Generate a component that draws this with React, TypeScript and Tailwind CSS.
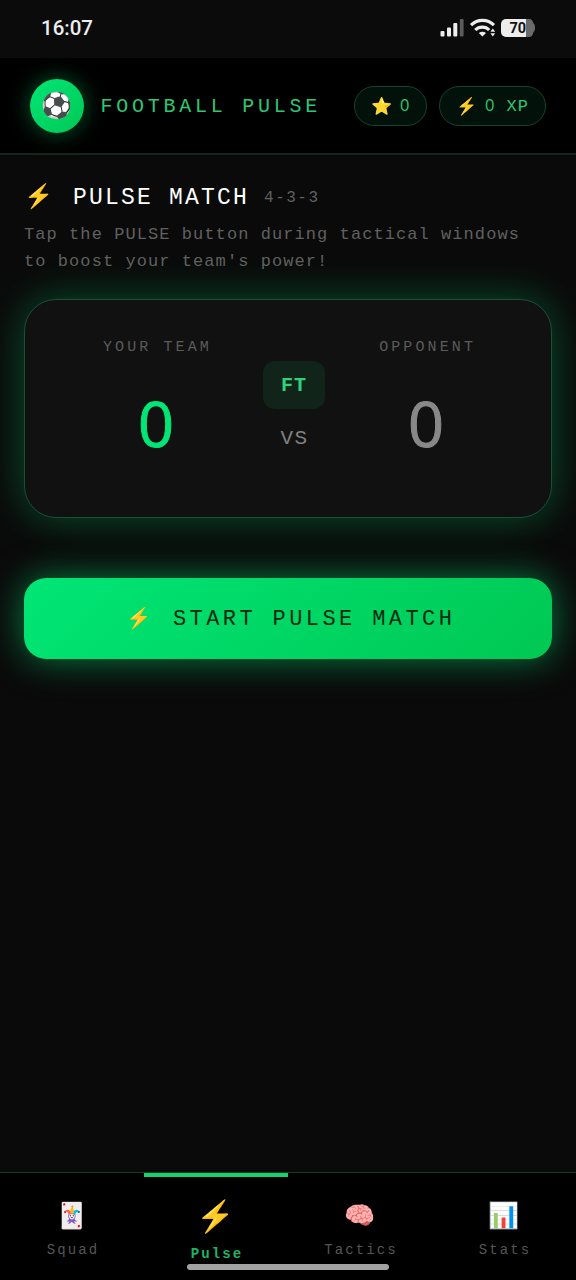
import type { ReactNode } from "react";
import clsx from "clsx";

const TABS = [
  { label: "Squad", icon: "🃏" },
  { label: "Pulse", icon: "⚡" },
  { label: "Tactics", icon: "🧠" },
  { label: "Stats", icon: "📊" },
];

function StatusBar() {
  return (
    <div className="flex h-[58px] shrink-0 items-center justify-between bg-[#0b0b0b] pr-[40px] pb-[2px] pl-[41px] text-[#ededed]">
      <span className="pt-px font-[Roboto,sans-serif] text-[20.5px] font-medium">16:07</span>
      <svg width="96" height="20" viewBox="0 0 96 20" fill="#ededed">
        <rect x="0.5" y="13" width="4" height="5.5" rx="1" />
        <rect x="7" y="9.5" width="4" height="9" rx="1" />
        <rect x="13.3" y="5" width="4" height="13.5" rx="1" />
        <rect x="19.8" y="1" width="3.8" height="17.5" rx="1" fill="#5c5c5c" />
        <g fill="none" stroke="#ededed" strokeWidth="3.2">
          <path d="M31 7.2C37.5 0.8 47.5 0.8 54 7.2" />
          <path d="M35.3 12C39 8.2 45.5 8.2 49.2 12" />
        </g>
        <path d="M38.8 15c2.2-1.8 5-1.8 7.2 0L42.4 18.4z" />
        <path d="M52.8 10.4l2.4 3.4h-4.8zM52.8 18.6l2.4-3.4h-4.8z" />
        <path d="M86 1h3c2.5 0 3.8 1.5 4.5 4.5 2 1 2 7.5 0 8.5-.7 3.5-2 5-4.5 5h-3z" fill="#6a6a6a" />
        <path d="M66 1h20v18H66a5 5 0 0 1-5-5V6a5 5 0 0 1 5-5z" />
        <text x="69.5" y="15" fill="#111" fontFamily="Roboto, sans-serif" fontSize="14.5" fontWeight="700">
          70
        </text>
      </svg>
    </div>
  );
}

function Emoji({ className, children }: { className?: string; children: ReactNode }) {
  return (
    <span className={clsx("font-['Noto_Color_Emoji',sans-serif] leading-none tracking-normal", className)}>
      {children}
    </span>
  );
}

function Pill({ icon, className, children }: { icon: string; className: string; children: ReactNode }) {
  return (
    <div
      className={clsx(
        "flex h-10 items-center rounded-full border-[1.5px] border-[#12452b] bg-[#02120a] pl-4 text-[17px] text-[#2cc873]",
        className,
      )}
    >
      <Emoji className="w-[29px] pt-px text-[17px]">{icon}</Emoji>
      {children}
    </div>
  );
}

// The mono face has a dotted zero, so bare zeros are set in Open Sans.
function Zero() {
  return <span className="font-['Open_Sans',sans-serif] text-[16.5px]">0</span>;
}

function Team({ name, className }: { name: string; className: string }) {
  return (
    <div className="flex flex-col items-center">
      <span className="text-[15px] leading-[17px] tracking-[3.1px] text-[#5b5b5b]">{name}</span>
      <span
        className={clsx(
          "mt-[27px] mr-[3px] font-['Open_Sans',sans-serif] text-[63px] leading-[80px] [-webkit-text-stroke:1px_currentColor]",
          className,
        )}
      >
        0
      </span>
    </div>
  );
}

export default function App() {
  return (
    <div className="flex h-[1280px] w-[576px] flex-col overflow-hidden bg-[#0a0a0a] font-['Liberation_Mono',monospace]">
      <StatusBar />
      <header className="flex h-[97px] shrink-0 items-center border-b-2 border-[#10291c] bg-black px-[30px]">
        <div className="grid size-[54px] place-items-center rounded-full bg-linear-135 from-[#00e676] to-[#00c853] shadow-[0_0_22px_rgba(0,230,118,0.4)]">
          <Emoji className="text-[25px]">⚽</Emoji>
        </div>
        <h1 className="ml-[16.5px] pt-[2px] text-[20px] tracking-[3.75px] whitespace-nowrap text-[#2cc873]">
          FOOTBALL PULSE
        </h1>
        <div className="ml-auto flex gap-3">
          <Pill icon="⭐" className="w-[73px]">
            <Zero />
          </Pill>
          <Pill icon="⚡" className="w-[107px]">
            <Zero />
            <span className="ml-[12px] pt-[2px] tracking-[1px]">XP</span>
          </Pill>
        </div>
      </header>

      <main className="flex flex-1 flex-col px-6 pt-[27px]">
        <div className="flex h-8 items-center whitespace-nowrap">
          <Emoji className="w-[49px] pb-[2px] text-[23.5px]">⚡</Emoji>
          <h2 className="text-[23px] tracking-[2.2px] text-white">PULSE MATCH</h2>
          <span className="ml-[15px] text-[16px] tracking-[1.5px] text-[#606060]">4-3-3</span>
        </div>
        <p className="mt-[7px] text-[17px] leading-[27px] tracking-[1.07px] whitespace-nowrap text-[#606060]">
          Tap the PULSE button during tactical windows
          <br />
          to boost your team's power!
        </p>

        <section className="mt-[24px] flex h-[219px] justify-between rounded-[32px] border-[1.5px] border-[#1b4f36] bg-[#111] pt-[39px] pr-[75px] pl-[78px] shadow-[0_0_40px_rgba(0,230,118,0.32)]">
          <Team name="YOUR TEAM" className="text-[#00e676]" />
          <div className="-mt-[2px] mr-[1.5px] -ml-[1.5px] flex w-[62px] shrink-0 flex-col items-center pt-[24px]">
            <span className="grid h-12 w-[62px] place-items-center rounded-xl bg-[#102419] pt-px text-[20px] font-bold tracking-[1px] text-[#2fd17d]">
              FT
            </span>
            <span className="mt-[17px] ml-px text-[21px] leading-[26px] tracking-[1.5px] text-[#808080]">VS</span>
          </div>
          <Team name="OPPONENT" className="text-[#888]" />
        </section>

        <button className="mt-[60px] flex h-[81px] shrink-0 items-center rounded-[22px] bg-linear-135 from-[#00e676] to-[#00c853] pt-[2px] pl-[102px] text-[22px] tracking-[3.4px] whitespace-nowrap text-[#032b10] shadow-[0_0_36px_rgba(0,230,118,0.55)]">
          <Emoji className="w-[47px] pb-[3px] text-left text-[20.5px]">⚡</Emoji>
          START PULSE MATCH
        </button>
      </main>

      <nav className="relative grid h-[108px] shrink-0 grid-cols-4 border-t-[1.5px] border-[#0d3f25] bg-black">
        {TABS.map((tab) => {
          const active = tab.label === "Pulse";
          return (
            <div
              key={tab.label}
              className={clsx(
                "flex flex-col items-center border-t-4 text-[14px] leading-4",
                active ? "border-[#1bcf6e] font-bold text-[#1fb463]" : "border-transparent text-[#555]",
              )}
            >
              <Emoji
                className={clsx(
                  "grid place-items-center",
                  active ? "mt-[19px] h-[40px] text-[31px]" : "mt-[20px] h-[36px] text-[25px]",
                )}
              >
                {tab.icon}
              </Emoji>
              <span className={clsx("pl-[2px] tracking-[2.1px]", active ? "mt-[10px]" : "mt-[9px]")}>{tab.label}</span>
            </div>
          );
        })}
        <div className="absolute bottom-[10px] left-[187px] h-[6px] w-[202px] rounded-full bg-[#a3a3a3]" />
      </nav>
    </div>
  );
}
